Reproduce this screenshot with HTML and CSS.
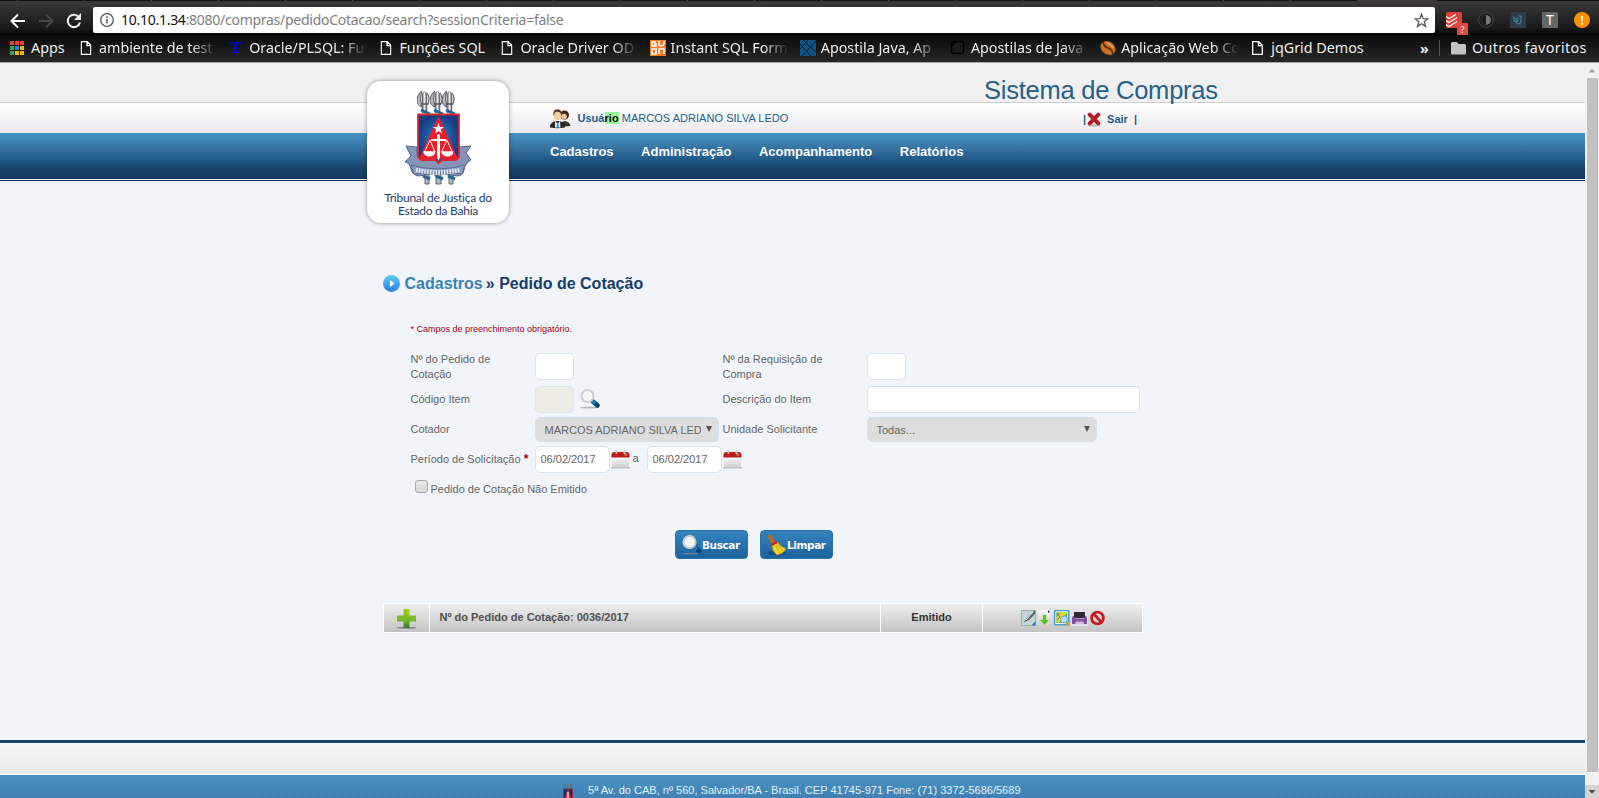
FILE: index.html
```html
<!DOCTYPE html>
<html lang="pt-BR">
<head>
<meta charset="utf-8">
<title>Sistema de Compras</title>
<link rel="stylesheet" href="styles.css">
</head>
<body>
<svg width="0" height="0" class="defs">
  <defs>
    <linearGradient id="red" x2="0" y2="1"><stop stop-color="#e0332c"/><stop offset="1" stop-color="#8f1010"/></linearGradient>
    <linearGradient id="green" x2="0" y2="1"><stop stop-color="#9bd312"/><stop offset=".6" stop-color="#6fb82a"/><stop offset="1" stop-color="#2c7a33"/></linearGradient>
    <linearGradient id="sky" x2="0" y2="1"><stop stop-color="#5ccdf5"/><stop offset="1" stop-color="#2a7de1"/></linearGradient>
    <linearGradient id="paper" x2="0" y2="1"><stop stop-color="#fdfdfd"/><stop offset="1" stop-color="#cfcfcf"/></linearGradient>
    <radialGradient id="shield"><stop stop-color="#2b86d0"/><stop offset="1" stop-color="#173c80"/></radialGradient>
    <linearGradient id="silver"><stop stop-color="#5a5f66"/><stop offset=".5" stop-color="#e8e8ea"/><stop offset="1" stop-color="#5a5f66"/></linearGradient>
    <symbol id="doc" viewBox="0 0 11 14"><path d="M.7.7h6l3.600 3.600v9H.7zM6.500.7v4h3.800" fill="none" stroke="#fff" stroke-width="1.300"/></symbol>
    <symbol id="calendar" viewBox="0 0 19 19">
      <rect x="0" y="17" width="19" height="1.500" fill="#aaa" opacity=".7"/>
      <path d="M1 6h17v9.500q0 2-2 2H3q-2 0-2-2z" fill="url(#paper)"/>
      <path d="M.5 7.500V5q0-3 3-3h12q3 0 3 3v2.500z" fill="#b81d18"/>
      <path d="M12 3q4-.5 5 2l-3 1z" fill="#de6c62"/>
      <path d="M5.500 0v4M13.500 0v4" stroke="#c9c9c9" stroke-width="1.800"/>
    </symbol>
    <symbol id="lens" viewBox="0 0 20 20">
      <ellipse cx="9" cy="18.600" rx="9" ry="1" fill="#8a8f95" opacity=".6"/>
      <path d="M13 12.500l4.500 4" stroke="#0c3f7e" stroke-width="4.500" stroke-linecap="round"/>
      <path d="M12 12l3 2.700" stroke="#1d74b9" stroke-width="4"/>
      <circle cx="7.500" cy="7" r="5.800" fill="#f4f6f8" stroke="#cbcdcf" stroke-width="2.500"/>
      <circle cx="7.500" cy="7" r="4.500" fill="none" stroke="#fff"/>
    </symbol>
    <symbol id="axe" viewBox="0 0 14 24">
      <path d="M5 23V4q2.500-5 5 0v19z" fill="url(#silver)" stroke="#555" stroke-width=".5"/>
      <path d="M4.500 1Q0 5 0 10t4.500 7Q2.500 9 4.500 1z" fill="#b5b8bc" stroke="#4b4e52" stroke-width=".9"/>
      <path d="M10 3q4 5 .5 12" fill="#ccc" stroke="#4b4e52" stroke-width="1"/>
      <path d="M4 14h7" stroke="#55595e" stroke-width="1.500"/>
    </symbol>
  </defs>
</svg>

<header class="browser">
  <div class="tabs-edge"><i></i><i></i><i></i><i></i><i></i><i></i><i></i><i></i><i></i><i></i><i></i><i></i><i></i><i></i><i></i><i></i><i></i><i></i><i></i><i></i><i class="active-tab"></i></div>
  <div class="toolbar">
    <svg class="back" width="16" height="16" viewBox="0 0 16 16"><path d="M15 8H2M8 1.500L1.500 8 8 14.500" fill="none" stroke="#fff" stroke-width="2"/></svg>
    <svg class="forward" width="16" height="16" viewBox="0 0 16 16"><path d="M1 8h13M8 1.500L14.500 8 8 14.500" fill="none" stroke="#484848" stroke-width="2"/></svg>
    <svg class="reload" width="16" height="16" viewBox="0 0 16 16"><path d="M13.200 4.500A6.200 6.200 0 1 0 14 9.500" fill="none" stroke="#eee" stroke-width="2"/><path d="M15 0v7H8z" fill="#eee"/></svg>
    <div class="address">
      <svg width="14" height="14" viewBox="0 0 14 14"><circle cx="7" cy="7" r="6.300" fill="none" stroke="#555" stroke-width="1.300"/><path d="M7 6v4.500M7 3.200v1.700" stroke="#555" stroke-width="1.500"/></svg>
      <span class="url"><b>10.10.1.34</b>:8080/compras/pedidoCotacao/search?sessionCriteria=false</span>
      <svg class="star" width="15" height="15" viewBox="0 0 15 15"><path d="M7.500 1.300l1.700 4.400 4.700.2-3.700 2.900 1.300 4.600-4-2.600-4 2.600 1.300-4.600L1.100 5.900l4.700-.2z" fill="none" stroke="#555" stroke-width="1.300"/></svg>
    </div>
    <div class="extensions">
      <svg width="22" height="24" viewBox="0 0 22 24"><rect width="16" height="16" rx="1.500" fill="#e0413a"/><path d="M0 4.500l3 2 7-4M0 8.500l3 2 8-5M0 12.500l3 2 8-5" fill="none" stroke="#fff" stroke-width="1.200"/><rect x="11" y="11" width="11" height="12" rx="1" fill="#dd4b41"/><text x="14.500" y="20.500" class="tiny">?</text></svg>
      <svg width="16" height="16" viewBox="0 0 16 16"><circle cx="8" cy="8" r="7.300" fill="#181818" stroke="#484848"/><path d="M8 3a5 5 0 0 1 0 10z" fill="#777"/><path d="M8 3a5 5 0 0 0 0 10" fill="none" stroke="#333"/></svg>
      <svg width="16" height="16" viewBox="0 0 16 16"><rect width="16" height="16" fill="#303a49"/><path d="M4 4.500v3.500q0 2 2 2t2-2V4.500M6 6v3q0 3 2.500 3T11 9V4H9" fill="none" stroke="#4b93b5" stroke-width=".9"/></svg>
      <span class="ext-t">T</span>
      <svg width="16" height="16" viewBox="0 0 16 16"><circle cx="8" cy="8" r="8" fill="#f59300"/><path d="M8 4v5M8 10.500v2" stroke="#fff" stroke-width="1.800"/></svg>
    </div>
  </div>
  <nav class="bookmarks">
    <a class="bm apps"><svg width="14" height="14" viewBox="0 0 14 14"><path d="M0 0h4v4H0zM5 0h4v4H5zM10 0h4v4h-4z" fill="#ea4335"/><path d="M0 5h4v4H0zM0 10h4v4H0z" fill="#34a853"/><path d="M5 5h4v4H5z" fill="#2489f4"/><path d="M10 5h4v4h-4zM5 10h4v4H5zM10 10h4v4h-4z" fill="#fbb40b"/></svg><span>Apps</span></a>
    <a class="bm cut"><svg width="16" height="14"><use href="#doc" width="11" height="14" x="2.500"/></svg><span>ambiente de test</span></a>
    <a class="bm cut"><span class="tee">T</span><span>Oracle/PLSQL: Fu</span></a>
    <a class="bm funcoes"><svg width="16" height="14"><use href="#doc" width="11" height="14" x="2.500"/></svg><span>Funções SQL</span></a>
    <a class="bm cut"><svg width="16" height="14"><use href="#doc" width="11" height="14" x="2.500"/></svg><span>Oracle Driver OD</span></a>
    <a class="bm cut"><svg width="16" height="16" viewBox="0 0 16 16"><rect width="16" height="16" fill="#f47b20"/><path d="M6 2H2v4h4V4H4M9 1v3q0 2 2 2t3-2V1M5 9H2v5h4V8M9 14V9h5v5" fill="none" stroke="#fff" stroke-width="1.500"/></svg><span>Instant SQL Form</span></a>
    <a class="bm cut"><svg width="16" height="16" viewBox="0 0 16 16"><rect width="16" height="16" fill="#105384"/><path d="M0 4l11 12M3 0l13 12M16 1L2 16M8 0L0 9" stroke="#071e30" fill="none"/></svg><span>Apostila Java, Ap</span></a>
    <a class="bm cut"><svg width="16" height="16" viewBox="0 0 16 16"><rect x="1.500" y="1.500" width="12" height="12" rx="2" fill="#191919" stroke="#000" stroke-width="1.500"/><path d="M2 7l5-5H2z"/></svg><span>Apostilas de Java</span></a>
    <a class="bm cut"><svg width="16" height="16" viewBox="0 0 16 16"><ellipse cx="8" cy="8" rx="8" ry="6.300" fill="#c87122" transform="rotate(35 8 8)"/><path d="M3 2q1 5 5 6t5 6" fill="none" stroke="#5b2708" stroke-width="1.500"/><path d="M7 3q4 1 6 5" fill="none" stroke="#e9a45c" stroke-width="1.500"/></svg><span>Aplicação Web Co</span></a>
    <a class="bm"><svg width="16" height="14"><use href="#doc" width="11" height="14" x="2"/></svg><span>jqGrid Demos</span></a>
    <span class="more">»</span>
    <a class="bm others"><svg width="15" height="13" viewBox="0 0 15 13"><path d="M0 1.500Q0 0 1.500 0H6l1.500 2H13.500Q15 2 15 3.500v8q0 1-1 1H1q-1 0-1-1z" fill="#c3c3c3"/></svg><span>Outros favoritos</span></a>
  </nav>
</header>

<div class="viewport">
  <div class="page">
    <div class="brand-bar"><h1>Sistema de Compras</h1></div>
    <div class="user-bar">
      <svg class="people" width="21" height="20" viewBox="0 0 21 20"><circle cx="14.500" cy="6" r="4.500" fill="#3c2a20"/><circle cx="14" cy="7.500" r="2.800" fill="#f1c79c"/><path d="M10 18q0-6 5-6 5 1 5.500 5z" fill="#38352f"/><circle cx="7.500" cy="4.500" r="4.300" fill="#59402b"/><ellipse cx="7.500" cy="7" rx="3.600" ry="4.300" fill="#f3cfa5"/><path d="M0 18.500q0-6.500 7.500-6.500T15 18.500q-7 1.500-15 0z" fill="#25252b"/><path d="M5 12l2.500 3 2.500-3 .5 6.500h-5.500z" fill="#eef3f8"/><path d="M7 13.500h1.300l.7 5.500H6.500z" fill="#2791c9"/></svg>
      <span class="user"><b>Usuá<mark>rio</mark></b> MARCOS ADRIANO SILVA LEDO</span>
      <span class="exit"><b>|</b><svg width="14" height="15" viewBox="0 0 14 15"><ellipse cx="7" cy="13.500" rx="6" ry="1.200" fill="#bbb"/><path d="M2.700 2.700l8.600 8.600M11.300 2.700l-8.600 8.600" stroke="#b81c1c" stroke-width="4" stroke-linecap="round"/></svg><b class="sair">Sair</b><b>|</b></span>
    </div>
    <nav class="menu"><a>Cadastros</a><a>Administração</a><a>Acompanhamento</a><a>Relatórios</a></nav>
    <div class="menu-edge"></div>

    <div class="logo">
      <svg width="68" height="96" viewBox="0 0 68 96">
        <use href="#axe" x="13" y="0" width="14" height="24"/>
        <use href="#axe" x="26" y="0" width="14" height="24"/>
        <use href="#axe" x="38" y="0" width="14" height="24"/>
        <path d="M19 80h6v14h-4v-8h-2zM31 80h6v14h-5v-8h-1zM44 80h5v14h-4v-8h-1z" fill="#b4b8bf" stroke="#454a50" stroke-width=".8"/>
        <path d="M17 20l9 4M30 20l9 4M42 20l9 4M19 86l7 3M32 86l7 3M44 86l7 3" stroke="#25649b" stroke-width="3"/>
        <path d="M2 56l11 1v9h42v-9l12-1-5 7 5 7q-6 3-7 10-1 6-7 6-20-5-38 0-7-1-8-7-1-6-6-7l6-6z" fill="#8794ba" stroke="#566487"/>
        <path d="M14 24.500h41V67q-1 3-5 3H38l-3.500 3-3.500-3H19q-4 0-5-3z" fill="url(#shield)" stroke="#d52b36" stroke-width="1.800"/>
        <path d="M34.500 26L54 69H15z" fill="#e91f2d"/>
        <path d="M34.500 33l1.500 4h4l-3.200 2.500 1.200 4-3.500-2.400-3.500 2.400 1.200-4L29 37h4z" fill="#fff"/>
        <path d="M33 44.500h3V49h6v2h-6v16l-1.500 4-1.500-4V51h-6v-2h6z" fill="#fff"/>
        <path d="M26 50l-5.500 12h10.500zM43 50l-5.500 12h10.500z" stroke="#fff" stroke-width=".9" fill="none"/><path d="M19 61.500h12.500q-1 5-6 5t-6.500-5zM37 61.500h12.500q-1 5-6 5t-6.500-5z" fill="#fff"/>
        <path d="M7 75q27 8 54 0l-3 9q-24-4-48 0z" fill="#8d9cc3" stroke="#5e6b91"/>
        <path d="M12 80q22 4.500 44 0" fill="none" stroke="#e8ecf6" stroke-width="4.500" stroke-dasharray="1.600 1.200"/>
      </svg>
      <p>Tribunal de Justiça do<br>Estado da Bahia</p>
    </div>

    <main>
      <h2><svg width="17" height="17" viewBox="0 0 17 17"><circle cx="8.500" cy="8.500" r="8.500" fill="url(#sky)"/><path d="M7 5l4.500 3.500L7 12z" fill="#fff"/></svg><span class="crumb">Cadastros</span><span class="arrows">»</span><span>Pedido de Cotação</span></h2>
      <p class="required">* Campos de preenchimento obrigatório.</p>
      <form class="criteria">
        <label>Nº do Pedido de<br>Cotação</label><div><span class="field small"></span></div>
        <label>Nº da Requisição de<br>Compra</label><div><span class="field small"></span></div>
        <label>Código Item</label><div><span class="field small off"></span><svg class="search" width="20" height="20"><use href="#lens"/></svg></div>
        <label>Descrição do Item</label><div><span class="field wide"></span></div>
        <label>Cotador</label><div><span class="select cotador"><span>MARCOS ADRIANO SILVA LEDO</span><i></i></span></div>
        <label>Unidade Solicitante</label><div><span class="select unit"><span>Todas...</span><i></i></span></div>
        <label>Período de Solicitação <b>*</b></label>
        <div class="period"><span class="field date">06/02/2017</span><svg width="19" height="19"><use href="#calendar"/></svg><span class="to">a</span><span class="field date">06/02/2017</span><svg width="19" height="19"><use href="#calendar"/></svg></div>
        <div class="check"><span class="box"></span><span>Pedido de Cotação Não Emitido</span></div>
      </form>
      <div class="actions">
        <span class="btn"><svg width="20" height="20"><use href="#lens"/></svg>Buscar</span>
        <span class="btn"><svg width="20" height="22" viewBox="0 0 20 22"><ellipse cx="10" cy="19" rx="9" ry="2.500" fill="#123f68" opacity=".6"/><path d="M3 2.500l4 8" stroke="#b56a20" stroke-width="4" stroke-linecap="round"/><path d="M5 11l6-3q1 4 8 7-3 5-9 6-5-4-5-10z" fill="#f2d42a" stroke="#c7a111" stroke-width=".7"/><path d="M4.500 11l5.500-3" stroke="#c4201b" stroke-width="2.500"/><path d="M9 12l4 7M11 11l5 6" stroke="#c9a616"/></svg>Limpar</span>
      </div>
      <div class="result">
        <div class="plus"><svg width="21" height="20" viewBox="0 0 21 20"><ellipse cx="10.500" cy="18.700" rx="10" ry="1" fill="#888"/><path d="M7.500 0h6v6.500H20v6h-6.500V19h-6v-6.500H1v-6h6.500z" fill="url(#green)"/></svg></div>
        <div class="order">Nº do Pedido de Cotação: 0036/2017</div>
        <div class="status">Emitido</div>
        <div class="tools">
          <svg width="15" height="16" viewBox="0 0 15 16"><rect x=".5" y=".5" width="14" height="15" fill="#c3d3d6" stroke="#9eb2b5"/><path d="M14 0L6 8l-3.500 4.500L8 10l6-6z" fill="#59676a"/><path d="M12 2L5 10" stroke="#e3eaea"/><path d="M14.500 11v4.500h-4z" fill="#0c83c7"/></svg>
          <svg width="15" height="16" viewBox="0 0 15 16"><path d="M1 0h9.500L14 3v13H1z" fill="url(#paper)" opacity=".7"/><path d="M11 0l2 2.500h-2z" fill="#222"/><path d="M5.800 5h3.400v5H12l-4.500 5L3 10h2.800z" fill="#62c41b"/></svg>
          <svg width="16" height="16" viewBox="0 0 16 16"><rect x=".7" y=".7" width="14" height="14" fill="#69b545" stroke="#3c95cf" stroke-width="1.400"/><rect x="1.800" y="1.800" width="11.800" height="11.800" fill="none" stroke="#fff"/><path d="M2.500 12V8l4-6h7L5 13z" fill="#d8d838"/><path d="M3 3l3 4-3 3" stroke="#da463c" fill="none"/><path d="M12 12l3.500 3.500" stroke="#e59a36" stroke-width="2.500"/><circle cx="10" cy="9.500" r="3.500" fill="#b9dcf2" stroke="#69acd3"/></svg>
          <svg width="17" height="17" viewBox="0 0 17 17"><rect width="17" height="17" fill="#e4e3ed"/><path d="M3 3h11v6H3z" fill="#302a35"/><path d="M1 9q0-2 2-2l1 2.500h9L14 7q2 0 2 2v6H1z" fill="#80519a"/><path d="M4 15l1-2.500h7l1 2.500z" fill="#cdbbd9"/></svg>
          <svg width="15" height="16" viewBox="0 0 15 16"><circle cx="7.500" cy="8" r="5.900" fill="none" stroke="#c51e20" stroke-width="2.800"/><path d="M3.500 3.500l8 9" stroke="#c51e20" stroke-width="2.800"/></svg>
        </div>
      </div>
    </main>

    <div class="footer-band"></div>
    <footer>
      <svg width="14" height="20" viewBox="0 0 14 20"><path d="M3 1h8M3 4h8" stroke="#6b7078" stroke-width="2" stroke-dasharray="2 1"/><path d="M2.500 5h9v13h-9z" fill="#152d67" stroke="#823044"/><path d="M7 5l4.500 12h-9z" fill="#e9273a"/><path d="M7 8v7" stroke="#f8c6c6" stroke-width="1.500"/></svg>
      <span>5ª Av. do CAB, nº 560, Salvador/BA - Brasil. CEP 41745-971 Fone: (71) 3372-5686/5689</span>
    </footer>
  </div>
  <aside class="scrollbar">
    <svg width="14" height="15" viewBox="0 0 14 15"><path d="M3.500 9.500h7L7 6z" fill="#a2a2a2"/></svg>
    <div class="thumb"></div>
    <svg class="down" width="14" height="13" viewBox="0 0 14 13"><path d="M3.500 5h7L7 8.700z" fill="#4d4d4d"/></svg>
  </aside>
</div>
</body>
</html>
```

FILE: styles.css
```css
* { box-sizing: border-box; }
body { margin: 0; width: 1599px; height: 798px; overflow: hidden; font-family: "Liberation Sans", Arial, sans-serif; font-size: 11px; color: #666; background: #f1f5fa; }
svg { display: block; flex: none; }
p, h1, h2 { margin: 0; }
.defs { position: absolute; }

/* Browser window */
.browser { height: 63px; background: #262626; border-bottom: 1px solid #aaa; font-family: "Noto Sans", "Open Sans", sans-serif; font-size: 14px; overflow: hidden; }
.tabs-edge { height: 1px; display: flex; background: #111; padding-left: 17px; }
.tabs-edge i { width: 67px; border-left: 1px solid #444; flex: none; }
.tabs-edge .active-tab { width: 80px; background: #3b3939; }
.toolbar { height: 34px; display: flex; align-items: flex-start; padding: 6px 9px 0 10px; background: linear-gradient(#3b3939, #191919 80%, #050505); }
.back { margin: 6px 12px 0 0; }
.forward { margin: 6px 12px 0 0; }
.reload { margin: 6px 11px 0 0; }
.address { width: 1342px; height: 26px; background: #fff; border-radius: 2px; display: flex; align-items: center; padding: 0 6px 0 7px; color: #808080; }
.address .url { margin-left: 7px; letter-spacing: -.27px; white-space: nowrap; line-height: 20px; }
.address b { color: #111; font-weight: 400; }
.star { margin-left: auto; }
.extensions { display: flex; gap: 16px; margin: 5px 0 0 11px; }
.extensions svg:first-child { margin-right: -6px; }
.tiny { font-size: 9px; fill: #fff; }
.ext-t { width: 16px; height: 16px; background: #666; color: #fff; line-height: 16px; text-align: center; border-radius: 1px; }
.bookmarks { height: 28px; display: flex; align-items: center; padding: 0 13px 2px 10px; background: linear-gradient(#0a0a0a, #292929); color: #eee; font-size: 14.300px; }
.bm { display: flex; align-items: center; gap: 5px; width: 150.200px; flex: none; white-space: nowrap; line-height: 20px; }
.bm > svg { width: 16px; }
.bm.apps { width: 68px; gap: 7px; }
.bm.apps > svg { width: 14px; }
.bm.funcoes { width: 121px; }
.bm.cut > span:last-child { width: 118px; overflow: hidden; -webkit-mask-image: linear-gradient(90deg, #000 78%, transparent); mask-image: linear-gradient(90deg, #000 78%, transparent); }
.tee { width: 16px; text-align: center; color: #0000e8; font: bold 17px "Liberation Serif", serif; }
.more { margin-left: auto; width: 19px; font-weight: 700; }
.bm.others { width: 147px; padding-left: 11px; border-left: 1px solid #555; height: 16px; gap: 6px; letter-spacing: .35px; }
.bm.others > svg { width: 15px; }

/* Page header */
.viewport { display: flex; height: 735px; }
.page { position: relative; width: 1585px; height: 735px; overflow: hidden; display: flex; flex-direction: column; }
.page > * { flex: none; }
.brand-bar { height: 40px; background: #f0f0f0; border-bottom: 1px solid #cfcfcf; }
.brand-bar h1 { position: relative; padding: 12px 0 0 984px; font-size: 25.500px; letter-spacing: -.24px; line-height: 30px; font-weight: 400; color: #25608c; white-space: nowrap; }
.user-bar { height: 30px; display: flex; padding-left: 550px; color: #25608c; background: linear-gradient(#fff, #ebebef); }
.people { margin-top: 6px; }
.user { margin: 9px 0 0 6.500px; width: 505.500px; line-height: 13px; letter-spacing: .03px; }
.user mark { background: #98fb98; color: #000; }
.exit { display: flex; line-height: 13px; padding-top: 10px; }
.exit svg { margin: -1px 6px 0 1px; }
.sair { margin-right: 6px; }
.menu { height: 45px; padding: 11px 0 0 550px; display: flex; gap: 27.500px; color: #fff; font-weight: 700; font-size: 13px; line-height: 15px; background: linear-gradient(#4693c6, #34719f 36%, #26608f 52%, #174368 80%, #143c60); }
.menu-edge { height: 3px; background: #fff; border: solid #0a2b58; border-width: 1px 0; }
.logo { position: absolute; left: 367px; top: 18px; width: 142px; height: 142px; border-radius: 14px; background: #fff; box-shadow: 0 0 4px rgba(0,0,0,.4); display: flex; flex-direction: column; align-items: center; padding-top: 9px; }
.logo p { margin-top: 5px; font: 12px/13px Lato, sans-serif; letter-spacing: -.25px; color: #1a4269; text-align: center; white-space: nowrap; }

/* Search form */
main { height: 559px; padding: 92px 0 0 383px; width: 1143px; }
h2 { display: flex; align-items: center; height: 20px; font-size: 16px; line-height: 20px; color: #173d66; }
h2 span { padding-top: 1px; }
.crumb { color: #3b82b3; margin-left: 4.500px; }
.arrows { margin: 0 4.500px 0 3px; }
.required { margin: 30px 0 0 27.500px; font-size: 9px; line-height: 12px; height: 12px; color: #a00018; }
.criteria { margin: 15px 0 0 27.500px; display: grid; grid-template-columns: 124.500px 187.500px 144.500px 276px; grid-template-rows: 33px 33px 27px 33px 27px; align-items: center; line-height: 15px; }
.criteria > div { display: flex; align-items: center; }
.criteria label { white-space: nowrap; }
.criteria label b { color: #a00018; font-size: 12px; line-height: 12px; }
.field { height: 27px; background: #fff; border: 1px solid #d9e4f1; border-radius: 5px; flex: none; }
.small { width: 39px; }
.off { background: #ebebe4; }
.wide { width: 273px; }
.date { width: 75px; padding: 0 4.500px; line-height: 25px; }
.search { margin: -1px 0 0 6px; }
.select { height: 25px; display: flex; background: #ddd; border: 1px solid #d5e1ef; border-radius: 5px; padding: 0 6px 0 8.500px; line-height: 24px; justify-content: space-between; }
.select span { overflow: hidden; white-space: nowrap; }
.select i { border: solid transparent; border-width: 6px 3.500px 0; border-top-color: #555; height: 0; margin-top: 8px; }
.cotador { width: 184px; }
.cotador span { width: 156px; }
.unit { width: 230px; }
.period { grid-column: 2 / 5; }
.period svg { margin-left: 1px; }
.period .to { width: 14.500px; margin: -2px 0 0 2.500px; }
.criteria .check { grid-column: 1 / 5; padding-left: 4px; gap: 3px; }
.box { width: 13px; height: 13px; margin-top: -6px; border: 1px solid #aaa; border-radius: 3px; background: linear-gradient(#e8e8e8, #d9d9d9); }
.actions { display: flex; gap: 12px; padding: 27px 0 0 292px; }
.btn { width: 73px; height: 29px; display: flex; align-items: center; border-radius: 4px; border: 1px solid #2b72ab; background: linear-gradient(#3583bd, #1b629d); color: #fff; font: bold 10.500px "DejaVu Sans", sans-serif; letter-spacing: -.4px; padding-left: 6px; }
.result { display: grid; grid-template-columns: 45px 450px 101px 159px; gap: 1px; width: 760px; margin-top: 44px; padding: 1px; background: #fff; color: #444; font-weight: 700; }
.result > div { height: 28px; background: linear-gradient(#efefef, #c3c3c3); display: flex; align-items: center; justify-content: center; line-height: 25px; padding-bottom: 2px; }
.result .plus { padding: 1px 1px 0 0; }
.result .order { justify-content: flex-start; padding-left: 9.500px; color: #505050; }
.result .status { color: #333; }
.result .tools { gap: 1.500px; padding-bottom: 1px; }

/* Footer */
.footer-band { height: 35px; background: linear-gradient(#f8f8f8, #e9e9e9); border-top: 3px solid #14466f; border-bottom: 1px solid #fff; }
footer { flex: 1; display: flex; padding: 9px 0 0 561px; color: #e6f1f8; background: repeating-linear-gradient(90deg, rgba(255,255,255,.04) 0 1px, transparent 1px 2px), linear-gradient(#4492c5, #3979ae); }
footer span { margin-left: 13px; line-height: 13px; white-space: nowrap; letter-spacing: .015px; }

/* Scrollbar */
.scrollbar { width: 14px; background: #f1f1f1; display: flex; flex-direction: column; }
.thumb { width: 11px; height: 694px; margin-left: 2px; background: #c1c1c1; }
.down { margin-top: auto; background: #d2d2d2; }
```
